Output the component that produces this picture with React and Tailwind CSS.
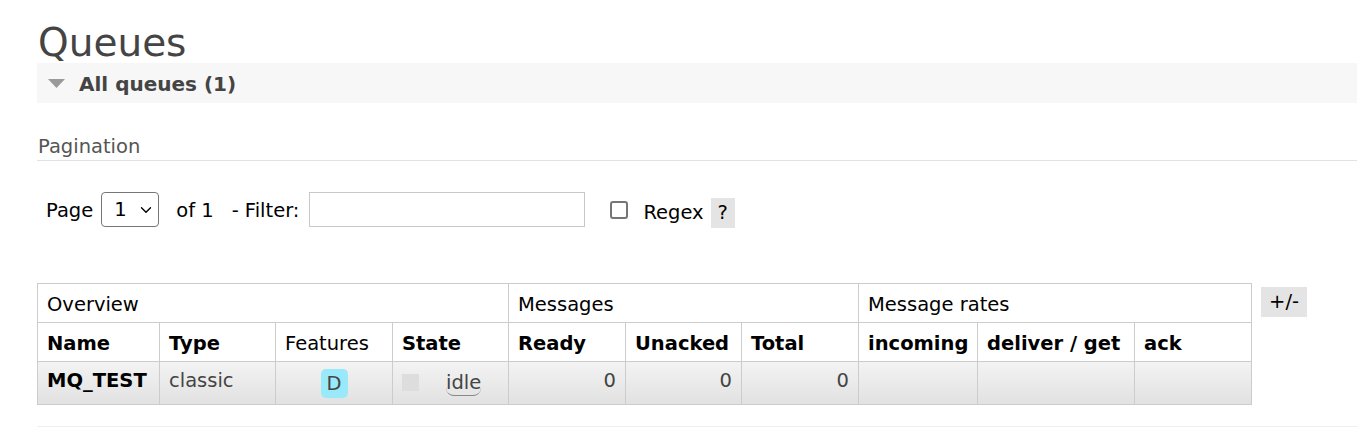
import { ChevronDown } from 'lucide-react';

const font = { fontFamily: '"DejaVu Sans", Verdana, sans-serif' };

const cols = [122, 116, 117, 116, 117, 116, 117, 119, 157, 117];

const App = () => {
  return (
    <div className="min-h-screen bg-white pt-[22px] pl-[37px] text-[19.5px] text-black" style={font}>
      <h1 className="text-[39px] leading-[41px] pl-px text-[#444] font-normal">Queues</h1>

      <div className="h-[40px] bg-[#f7f7f7] flex items-center">
        <svg width="17" height="9" viewBox="0 0 17 9" className="ml-[11px]">
          <polygon points="0,0 17,0 8.5,9" fill="#9a9a9a" />
        </svg>
        <span className="ml-[14px] mt-[2px] font-bold text-[20px] text-[#444]">All queues (1)</span>
      </div>

      <div className="mt-[32px] leading-[24px] pl-px pb-[1px] border-b border-[#e2e2e2] text-[#555]">
        Pagination
      </div>

      <div className="mt-[31px] flex items-center h-[35px] pl-[9px]">
        <span className="leading-none mt-[2px]">Page</span>
        <div className="ml-[8px] w-[58px] h-[35px] border border-[#767676] rounded-[4px] flex items-center pl-[12px]">
          <span>1</span>
          <ChevronDown size={18} strokeWidth={1.8} className="ml-[10px]" />
        </div>
        <span className="ml-[17px] mt-[2px]">of 1</span>
        <span className="ml-[18px] mt-[2px]">- Filter:</span>
        <div className="ml-[10px] w-[276px] h-[35px] border border-[#c8c8c8]" />
        <div className="ml-[25px] w-[18px] h-[18px] border-2 border-[#767676] rounded-[3px] bg-white" />
        <span className="ml-[15px] mt-[7px]">Regex</span>
        <span className="ml-[7px] mt-[7px] w-[24px] h-[30px] bg-[#e4e4e4] flex items-center justify-center">?</span>
      </div>

      <div className="mt-[56px] flex items-start">
        <table className="table-fixed border-collapse w-[1214px]">
          <colgroup>
            {cols.map((w, i) => (
              <col key={i} style={{ width: w }} />
            ))}
          </colgroup>
          <thead>
            <tr className="h-[39px]">
              <th colSpan={4} className="border border-[#cccccc] text-left font-normal px-[9px] pt-[3px]">Overview</th>
              <th colSpan={3} className="border border-[#cccccc] text-left font-normal px-[9px] pt-[3px]">Messages</th>
              <th colSpan={3} className="border border-[#cccccc] text-left font-normal px-[9px] pt-[3px]">Message rates</th>
            </tr>
            <tr className="h-[39px]">
              <th className="border border-[#cccccc] text-left font-bold px-[9px] pt-[3px]">Name</th>
              <th className="border border-[#cccccc] text-left font-bold px-[9px] pt-[3px]">Type</th>
              <th className="border border-[#cccccc] text-left font-normal px-[9px] pt-[3px]">Features</th>
              <th className="border border-[#cccccc] text-left font-bold px-[9px] pt-[3px]">State</th>
              <th className="border border-[#cccccc] text-left font-bold px-[9px] pt-[3px]">Ready</th>
              <th className="border border-[#cccccc] text-left font-bold px-[9px] pt-[3px]">Unacked</th>
              <th className="border border-[#cccccc] text-left font-bold px-[9px] pt-[3px]">Total</th>
              <th className="border border-[#cccccc] text-left font-bold px-[9px] pt-[3px] whitespace-nowrap">incoming</th>
              <th className="border border-[#cccccc] text-left font-bold px-[9px] pt-[3px] whitespace-nowrap">deliver / get</th>
              <th className="border border-[#cccccc] text-left font-bold px-[9px] pt-[3px]">ack</th>
            </tr>
          </thead>
          <tbody>
            <tr className="h-[43px] bg-linear-to-b from-[#f3f3f3] to-[#e1e1e1] text-[#444]">
              <td className="border border-[#cccccc] px-[9px] pb-[5px] font-bold text-black">MQ_TEST</td>
              <td className="border border-[#cccccc] px-[9px] pb-[5px]">classic</td>
              <td className="border border-[#cccccc] px-[9px] text-center">
                <span className="inline-flex items-center justify-center w-[27px] h-[29px] mt-[1px] rounded-[5px] bg-[#99e9fb] text-[#444]">
                  D
                </span>
              </td>
              <td className="border border-[#cccccc] px-[9px]">
                <div className="flex items-center">
                  <span className="w-[17px] h-[17px] bg-[#dddddd] mb-[2px]" />
                  <span className="ml-[27px] leading-[24px] border-b border-[#888] rounded-b-[8px]">idle</span>
                </div>
              </td>
              <td className="border border-[#cccccc] px-[9px] pb-[5px] text-right">0</td>
              <td className="border border-[#cccccc] px-[9px] pb-[5px] text-right">0</td>
              <td className="border border-[#cccccc] px-[9px] pb-[5px] text-right">0</td>
              <td className="border border-[#cccccc] px-[9px]"></td>
              <td className="border border-[#cccccc] px-[9px]"></td>
              <td className="border border-[#cccccc] px-[9px]"></td>
            </tr>
          </tbody>
        </table>
        <span className="ml-[9px] mt-[4px] w-[46px] h-[30px] bg-[#e4e4e4] flex items-center justify-center">+/-</span>
      </div>

      <div className="mt-[21px] border-t border-[#eeeeee]" />
    </div>
  );
};

export default App;
